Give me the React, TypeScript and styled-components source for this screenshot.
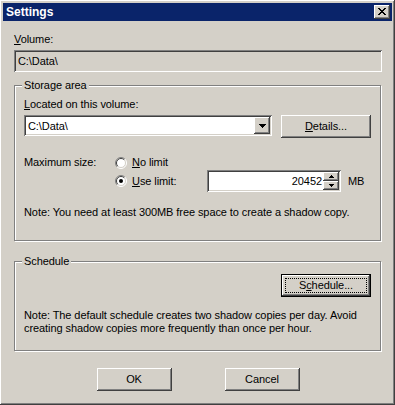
import React from "react";
import styled, { createGlobalStyle } from "styled-components";

const Global = createGlobalStyle`
  html, body { margin: 0; padding: 0; background: #d4d0c8; }
  body { font-family: "Liberation Sans", Arial, sans-serif; font-size: 11px; letter-spacing: -0.08px; color: #000; }
  * { box-sizing: border-box; }
`;

const FACE = "#d4d0c8";
const raised = `box-shadow: inset -1px -1px #404040, inset 1px 1px #ffffff, inset -2px -2px #808080, inset 2px 2px ${FACE};`;
const sunken = `box-shadow: inset 1px 1px #808080, inset -1px -1px #ffffff, inset 2px 2px #404040, inset -2px -2px ${FACE};`;

const Window = styled.div`
  width: 395px;
  height: 405px;
  background: ${FACE};
  padding: 3px;
  display: flex;
  flex-direction: column;
  ${raised}
`;

const TitleBar = styled.div`
  height: 18px;
  background: #0a246a;
  color: #fff;
  display: flex;
  align-items: center;
  justify-content: space-between;
  padding: 0 2px 0 3px;
`;

const Title = styled.span`
  font-weight: bold;
  font-size: 12px;
  line-height: 14px;
  letter-spacing: 0;
`;

const CloseButton = styled.div`
  width: 16px;
  height: 14px;
  background: ${FACE};
  display: flex;
  align-items: center;
  justify-content: center;
  padding-bottom: 1px;
  padding-right: 1px;
  ${raised}
`;

const Body = styled.div`
  padding: 12px 10px 0 11px;
  display: flex;
  flex-direction: column;
`;

const Text = styled.div<{ $mt?: number }>`
  line-height: 13px;
  margin-top: ${(p) => p.$mt ?? 0}px;
  white-space: nowrap;
`;

const Field = styled.div`
  height: 22px;
  margin-top: 4px;
  padding: 0 4px;
  display: flex;
  align-items: center;
  background: ${FACE};
  ${sunken}
`;

const Group = styled.div<{ $mt: number; $h: number }>`
  position: relative;
  width: 367px;
  height: ${(p) => p.$h}px;
  margin-top: ${(p) => p.$mt}px;
  border: 1px solid #808080;
  box-shadow: 1px 1px 0 #fff, inset 1px 1px 0 #fff;
  padding: 12px 9px 0 9px;
`;

const Legend = styled.span`
  position: absolute;
  top: -7px;
  left: 7px;
  padding: 0 2px 0 2px;
  background: ${FACE};
  line-height: 13px;
`;

const ComboRow = styled.div`
  display: flex;
  align-items: flex-start;
  justify-content: space-between;
  margin-top: 4px;
`;

const Combo = styled.div`
  width: 248px;
  height: 21px;
  background: #fff;
  display: flex;
  align-items: center;
  justify-content: space-between;
  padding: 2px 2px 2px 4px;
  ${sunken}
`;

const DropButton = styled.div`
  width: 16px;
  height: 17px;
  background: ${FACE};
  display: flex;
  align-items: center;
  justify-content: center;
  ${raised}
`;

const Button = styled.div<{ $w: number; $default?: boolean }>`
  position: relative;
  width: ${(p) => p.$w}px;
  height: 23px;
  background: ${FACE};
  display: flex;
  align-items: center;
  justify-content: center;
  line-height: 13px;
  ${(p) =>
    p.$default
      ? `border: 1px solid #000;
         box-shadow: inset -1px -1px #404040, inset 1px 1px #fff, inset -2px -2px #808080;
         &::after { content: ""; position: absolute; inset: 3px; border: 1px dotted #000; }`
      : raised}
`;

const SizeGrid = styled.div`
  display: grid;
  grid-template-columns: 91px 92px 134px auto;
  row-gap: 1px;
  align-items: center;
  margin-top: 18px;
`;

const RadioOption = styled.label`
  display: flex;
  align-items: center;
  gap: 5px;
  line-height: 13px;
`;

const Spinner = styled.div`
  height: 22px;
  background: #fff;
  display: flex;
  align-items: stretch;
  justify-content: flex-end;
  padding: 2px;
  ${sunken}
`;

const SpinValue = styled.span`
  align-self: center;
  padding-right: 1px;
`;

const SpinButtons = styled.div`
  width: 16px;
  display: flex;
  flex-direction: column;
`;

const SpinButton = styled.div`
  flex: 1;
  background: ${FACE};
  display: flex;
  align-items: center;
  justify-content: center;
  ${raised}
`;

const Unit = styled.span`
  margin-left: 7px;
`;

const ScheduleRow = styled.div`
  display: flex;
  justify-content: flex-end;
`;

const Footer = styled.div`
  display: flex;
  justify-content: center;
  gap: 53px;
  margin-top: 17px;
`;

const Pixels: React.FC<{ rows: string[]; color?: string }> = ({ rows, color = "#000" }) => (
  <svg width={rows[0].length} height={rows.length} shapeRendering="crispEdges" style={{ display: "block" }}>
    {rows.flatMap((r, y) =>
      r.split("").map((c, x) => (c === "X" ? <rect key={`${x}-${y}`} x={x} y={y} width={1} height={1} fill={color} /> : null))
    )}
  </svg>
);

const Radio: React.FC<{ checked?: boolean }> = ({ checked }) => (
  <svg width={12} height={12} style={{ display: "block" }}>
    <circle cx={6} cy={6} r={5} fill="#fff" />
    <path d="M2.1 9.9 A5.5 5.5 0 0 1 9.9 2.1" stroke="#808080" fill="none" />
    <path d="M9.9 2.1 A5.5 5.5 0 0 1 2.1 9.9" stroke="#fff" fill="none" />
    <path d="M2.8 9.2 A4.5 4.5 0 0 1 9.2 2.8" stroke="#404040" fill="none" />
    <path d="M9.2 2.8 A4.5 4.5 0 0 1 2.8 9.2" stroke={FACE} fill="none" />
    {checked && <circle cx={6} cy={6} r={2} fill="#000" />}
  </svg>
);

const App: React.FC = () => (
  <>
    <Global />
    <Window>
      <TitleBar>
        <Title>Settings</Title>
        <CloseButton>
          <Pixels rows={["XX....XX", ".XX..XX.", "..XXXX..", "...XX...", "..XXXX..", ".XX..XX.", "XX....XX"]} />
        </CloseButton>
      </TitleBar>
      <Body>
        <Text>
          <u>V</u>olume:
        </Text>
        <Field>C:\Data\</Field>

        <Group $mt={13} $h={156}>
          <Legend>Storage area</Legend>
          <Text>
            <u>L</u>ocated on this volume:
          </Text>
          <ComboRow>
            <Combo>
              <span>C:\Data\</span>
              <DropButton>
                <Pixels rows={["XXXXXXX", ".XXXXX.", "..XXX..", "...X..."]} />
              </DropButton>
            </Combo>
            <Button $w={90}>
              <span>
                <u>D</u>etails...
              </span>
            </Button>
          </ComboRow>
          <SizeGrid>
            <Text>Maximum size:</Text>
            <RadioOption>
              <Radio />
              <span>
                <u>N</u>o limit
              </span>
            </RadioOption>
            <span />
            <span />
            <span />
            <RadioOption>
              <Radio checked />
              <span>
                <u>U</u>se limit:
              </span>
            </RadioOption>
            <Spinner>
              <SpinValue>20452</SpinValue>
              <SpinButtons>
                <SpinButton>
                  <Pixels rows={["..X..", ".XXX.", "XXXXX"]} />
                </SpinButton>
                <SpinButton>
                  <Pixels rows={["XXXXX", ".XXX.", "..X.."]} />
                </SpinButton>
              </SpinButtons>
            </Spinner>
            <Unit>MB</Unit>
          </SizeGrid>
          <Text $mt={14}>Note: You need at least 300MB free space to create a shadow copy.</Text>
        </Group>

        <Group $mt={20} $h={90}>
          <Legend>Schedule</Legend>
          <ScheduleRow>
            <Button $w={90} $default>
              <span>
                S<u>c</u>hedule...
              </span>
            </Button>
          </ScheduleRow>
          <Text $mt={12}>Note: The default schedule creates two shadow copies per day. Avoid</Text>
          <Text>creating shadow copies more frequently than once per hour.</Text>
        </Group>

        <Footer>
          <Button $w={75}>OK</Button>
          <Button $w={75}>Cancel</Button>
        </Footer>
      </Body>
    </Window>
  </>
);

export default App;
